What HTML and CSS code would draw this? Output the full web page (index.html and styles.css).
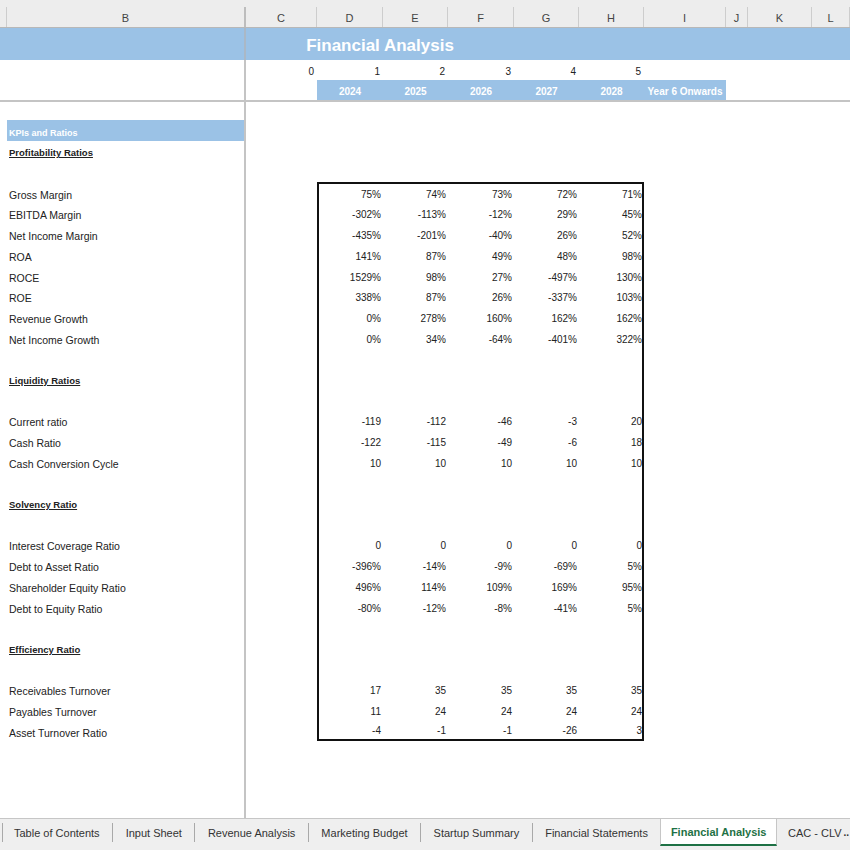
FILE: index.html
```html
<!DOCTYPE html>
<html>
<head>
<meta charset="utf-8">
<link rel="stylesheet" href="styles.css">
</head>
<body>
<div class="sheet">
  <div class="r hdr"><i></i><span class="b">B</span><span>C</span><span>D</span><span>E</span><span>F</span><span>G</span><span>H</span><span>I</span><span>J</span><span>K</span><span>L</span></div>
  <div class="r ttl"><i></i><span class="b"></span><span class="tt">Financial Analysis</span></div>
  <div class="r nums"><i></i><span class="b"></span><span class="v">0</span><span class="v">1</span><span class="v">2</span><span class="v">3</span><span class="v">4</span><span class="v">5</span></div>
  <div class="r yrs"><i></i><span class="b"></span><i></i><span class="y">2024</span><span class="y">2025</span><span class="y">2026</span><span class="y">2027</span><span class="y">2028</span><span class="y">Year 6 Onwards</span></div>
  <div class="hl"></div>
  <div class="r gap"><i></i><span class="b"></span></div>

  <div class="r d"><i></i><span class="b kpi">KPIs and Ratios</span></div>
  <div class="r d"><i></i><span class="b hd">Profitability Ratios</span></div>
  <div class="r d"><i></i><span class="b"></span></div>

  <div class="r d bx top"><i></i><span class="b">Gross Margin</span><i></i><span class="v">75%</span><span class="v">74%</span><span class="v">73%</span><span class="v">72%</span><span class="v">71%</span></div>
  <div class="r d bx"><i></i><span class="b">EBITDA Margin</span><i></i><span class="v">-302%</span><span class="v">-113%</span><span class="v">-12%</span><span class="v">29%</span><span class="v">45%</span></div>
  <div class="r d bx"><i></i><span class="b">Net Income Margin</span><i></i><span class="v">-435%</span><span class="v">-201%</span><span class="v">-40%</span><span class="v">26%</span><span class="v">52%</span></div>
  <div class="r d bx"><i></i><span class="b">ROA</span><i></i><span class="v">141%</span><span class="v">87%</span><span class="v">49%</span><span class="v">48%</span><span class="v">98%</span></div>
  <div class="r d bx"><i></i><span class="b">ROCE</span><i></i><span class="v">1529%</span><span class="v">98%</span><span class="v">27%</span><span class="v">-497%</span><span class="v">130%</span></div>
  <div class="r d bx"><i></i><span class="b">ROE</span><i></i><span class="v">338%</span><span class="v">87%</span><span class="v">26%</span><span class="v">-337%</span><span class="v">103%</span></div>
  <div class="r d bx"><i></i><span class="b">Revenue Growth</span><i></i><span class="v">0%</span><span class="v">278%</span><span class="v">160%</span><span class="v">162%</span><span class="v">162%</span></div>
  <div class="r d bx"><i></i><span class="b">Net Income Growth</span><i></i><span class="v">0%</span><span class="v">34%</span><span class="v">-64%</span><span class="v">-401%</span><span class="v">322%</span></div>
  <div class="r d bx"><i></i><span class="b"></span><i></i><span class="v"></span><span class="v"></span><span class="v"></span><span class="v"></span><span class="v"></span></div>
  <div class="r d bx"><i></i><span class="b hd">Liquidity Ratios</span><i></i><span class="v"></span><span class="v"></span><span class="v"></span><span class="v"></span><span class="v"></span></div>
  <div class="r d bx"><i></i><span class="b"></span><i></i><span class="v"></span><span class="v"></span><span class="v"></span><span class="v"></span><span class="v"></span></div>
  <div class="r d bx"><i></i><span class="b">Current ratio</span><i></i><span class="v">-119</span><span class="v">-112</span><span class="v">-46</span><span class="v">-3</span><span class="v">20</span></div>
  <div class="r d bx"><i></i><span class="b">Cash Ratio</span><i></i><span class="v">-122</span><span class="v">-115</span><span class="v">-49</span><span class="v">-6</span><span class="v">18</span></div>
  <div class="r d bx"><i></i><span class="b">Cash Conversion Cycle</span><i></i><span class="v">10</span><span class="v">10</span><span class="v">10</span><span class="v">10</span><span class="v">10</span></div>
  <div class="r d bx"><i></i><span class="b"></span><i></i><span class="v"></span><span class="v"></span><span class="v"></span><span class="v"></span><span class="v"></span></div>
  <div class="r d bx"><i></i><span class="b hd">Solvency Ratio</span><i></i><span class="v"></span><span class="v"></span><span class="v"></span><span class="v"></span><span class="v"></span></div>
  <div class="r d bx"><i></i><span class="b"></span><i></i><span class="v"></span><span class="v"></span><span class="v"></span><span class="v"></span><span class="v"></span></div>
  <div class="r d bx"><i></i><span class="b">Interest Coverage Ratio</span><i></i><span class="v">0</span><span class="v">0</span><span class="v">0</span><span class="v">0</span><span class="v">0</span></div>
  <div class="r d bx"><i></i><span class="b">Debt to Asset Ratio</span><i></i><span class="v">-396%</span><span class="v">-14%</span><span class="v">-9%</span><span class="v">-69%</span><span class="v">5%</span></div>
  <div class="r d bx"><i></i><span class="b">Shareholder Equity Ratio</span><i></i><span class="v">496%</span><span class="v">114%</span><span class="v">109%</span><span class="v">169%</span><span class="v">95%</span></div>
  <div class="r d bx"><i></i><span class="b">Debt to Equity Ratio</span><i></i><span class="v">-80%</span><span class="v">-12%</span><span class="v">-8%</span><span class="v">-41%</span><span class="v">5%</span></div>
  <div class="r d bx"><i></i><span class="b"></span><i></i><span class="v"></span><span class="v"></span><span class="v"></span><span class="v"></span><span class="v"></span></div>
  <div class="r d bx"><i></i><span class="b hd">Efficiency Ratio</span><i></i><span class="v"></span><span class="v"></span><span class="v"></span><span class="v"></span><span class="v"></span></div>
  <div class="r d bx"><i></i><span class="b"></span><i></i><span class="v"></span><span class="v"></span><span class="v"></span><span class="v"></span><span class="v"></span></div>
  <div class="r d bx"><i></i><span class="b">Receivables Turnover</span><i></i><span class="v">17</span><span class="v">35</span><span class="v">35</span><span class="v">35</span><span class="v">35</span></div>
  <div class="r d bx"><i></i><span class="b">Payables Turnover</span><i></i><span class="v">11</span><span class="v">24</span><span class="v">24</span><span class="v">24</span><span class="v">24</span></div>
  <div class="r d bx bot"><i></i><span class="b">Asset Turnover Ratio</span><i></i><span class="v">-4</span><span class="v">-1</span><span class="v">-1</span><span class="v">-26</span><span class="v">3</span></div>

  <div class="r fill"><i></i><span class="b"></span></div>
</div>
<div class="tabs">
  <i class="sep"></i><span class="tab first">Table of Contents</span>
  <i class="sep"></i><span class="tab">Input Sheet</span>
  <i class="sep"></i><span class="tab">Revenue Analysis</span>
  <i class="sep"></i><span class="tab">Marketing Budget</span>
  <i class="sep"></i><span class="tab">Startup Summary</span>
  <i class="sep"></i><span class="tab">Financial Statements</span>
  <span class="tab active">Financial Analysis</span>
  <span class="tab last">CAC - CLV</span><b class="more">..</b>
</div>
</body>
</html>
```
FILE: styles.css
```css
* { box-sizing: border-box; margin: 0; padding: 0; }
html, body { width: 850px; height: 850px; }
body {
  overflow: hidden;
  font-family: "Liberation Sans", Arial, sans-serif;
  color: #222;
  background: #fff;
  display: flex;
  flex-direction: column;
}
.sheet { flex: 1; display: flex; flex-direction: column; }

.r {
  display: grid;
  grid-template-columns: 7px 239px 71px 66px 65px 66px 65px 65px 82px 22px 64px 1fr;
}
.r > * {
  display: flex;
  align-items: center;
  white-space: nowrap;
  overflow: hidden;
  font-style: normal;
}
.r > .b { border-right: 2px solid #c4c4c4; }

/* column header */
.hdr {
  height: 28px;
  padding-top: 7px;
  background: #ededed;
  border-bottom: 1px solid #b8b8b8;
}
.hdr > * {
  justify-content: center;
  font-size: 11px;
  color: #444;
  border-right: 1px solid #cdcdcd;
  padding-top: 1px;
}
.hdr > .b { border-right: 2px solid #bdbdbd; }

/* title band */
.ttl { height: 32px; background: #9bc2e6; }
.ttl > .b { border-right-color: #aab8c6; }
.tt {
  grid-column: 3 / 7;
  justify-content: center;
  color: #fff;
  font-weight: bold;
  font-size: 17px;
  padding-top: 3px;
}

/* period numbers */
.nums { height: 20px; }
.nums .v { padding-right: 3px; padding-top: 2px; }

/* years */
.yrs { height: 20px; }
.y {
  background: #9bc2e6;
  color: #fff;
  font-weight: bold;
  font-size: 10px;
  justify-content: center;
  padding-top: 2px;
}

.hl { height: 2px; background: #c4c4c4; }
.gap { height: 18px; }

/* data rows */
.d { height: 20.7px; }
.d > * { align-items: flex-end; padding-bottom: 2px; line-height: 12px; }
.d > .b { padding-left: 2px; font-size: 10.5px; }
.v {
  justify-content: flex-end;
  padding-right: 2px;
  font-size: 10px;
}
.d > .b.kpi {
  background: #9bc2e6;
  color: #fff;
  font-weight: bold;
  font-size: 9px;
}
.d > .b.hd {
  font-weight: bold;
  font-size: 9.5px;
  text-decoration: underline;
}

/* outlined value block */
.bx > :nth-child(4) { border-left: 2px solid #111; }
.bx > :nth-child(8) { border-right: 2px solid #111; padding-right: 0; }
.top > :nth-child(n+4):nth-child(-n+8) { border-top: 2px solid #111; }
.bot > :nth-child(n+4):nth-child(-n+8) { border-bottom: 2px solid #111; }

.fill { flex: 1; }

/* sheet tabs */
.tabs {
  height: 32px;
  flex: none;
  display: flex;
  align-items: stretch;
  padding-left: 2px;
  background: #efefef;
  border-top: 1px solid #c6c6c6;
  padding-bottom: 4px;
  overflow: hidden;
}
.tabs > * { flex: none; }
.sep {
  width: 1px;
  background: #a9a9a9;
  align-self: center;
  height: 19px;
}
.tab {
  display: flex;
  align-items: center;
  padding: 0 12.5px;
  font-size: 11px;
  color: #333;
  white-space: nowrap;
}
.tab.first { padding-left: 11px; }
.tab.active {
  background: #fff;
  color: #1e7145;
  font-weight: bold;
  padding: 0 9.5px;
  border-left: 1px solid #c6c6c6;
  border-right: 1px solid #c6c6c6;
  border-bottom: 2px solid #1e7145;
}
.tab.last { padding: 0 2px 0 11px; }
.more {
  display: flex;
  align-items: center;
  font-size: 10px;
  color: #333;
}
```
